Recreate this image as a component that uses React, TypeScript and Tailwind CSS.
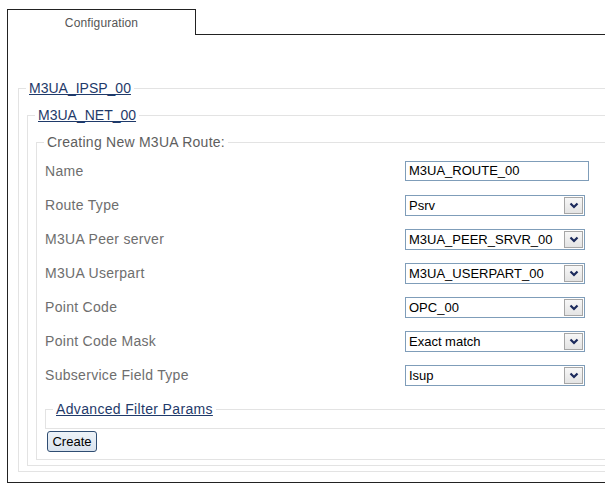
import React from "react";

function Chevron() {
  return (
    <svg width="10" height="7" viewBox="0 0 10 7">
      <path d="M1.5 1.5 L5 5 L8.5 1.5" fill="none" stroke="#1b2a5c" strokeWidth="2.2" />
    </svg>
  );
}

function Select({ value }: { value: string }) {
  return (
    <div className="w-[180px] h-[21px] border border-[#7f9db9] bg-white flex items-center justify-between pl-[3px] pr-px text-[13px] text-black">
      <span className="leading-[15px]">{value}</span>
      <div className="w-[19px] h-[17px] border border-[#a6a6a6] bg-gradient-to-b from-[#f7f7f7] to-[#e4e4e4] flex items-center justify-center">
        <Chevron />
      </div>
    </div>
  );
}

const rows: { label: string; value: string; input?: boolean }[] = [
  { label: "Name", value: "M3UA_ROUTE_00", input: true },
  { label: "Route Type", value: "Psrv" },
  { label: "M3UA Peer server", value: "M3UA_PEER_SRVR_00" },
  { label: "M3UA Userpart", value: "M3UA_USERPART_00" },
  { label: "Point Code", value: "OPC_00" },
  { label: "Point Code Mask", value: "Exact match" },
  { label: "Subservice Field Type", value: "Isup" },
];

export default function App() {
  return (
    <div
      className="w-[605px] h-[487px] overflow-hidden bg-white"
      style={{ fontFamily: '"Liberation Sans", Arial, sans-serif' }}
    >
      <div className="w-[800px] pt-[9px] pl-[7px]">
        <div className="flex h-[26px]">
          <div className="w-[189px] border-t border-l border-r border-[#222] flex items-center justify-center text-[12px] tracking-[0.15px] text-[#555]">
            Configuration
          </div>
          <div className="flex-1 border-b border-[#222]" />
        </div>
        <div className="border-l border-b border-[#222] pt-[45px] pb-[10px]">
          <fieldset className="ml-[10px] border border-[#e3e3e3] pb-[5px]">
            <legend className="ml-[7px] px-[3px] text-[14px] leading-[16px] text-[#1f3a6a] underline">
              M3UA_IPSP_00
            </legend>
            <fieldset className="ml-[8px] mt-[11px] border border-[#e3e3e3] pb-[5px]">
              <legend className="ml-[7px] px-[3px] text-[14px] leading-[16px] text-[#1f3a6a] underline">
                M3UA_NET_00
              </legend>
              <fieldset className="ml-[8px] mt-[11px] border border-[#e3e3e3] pb-[7px]">
                <legend className="ml-[7px] px-[3px] text-[14px] leading-[16px] tracking-[0.25px] text-[#5e5e5e]">
                  Creating New M3UA Route:
                </legend>
                <div className="pt-[4px] pl-[8px] flex flex-col items-start">
                  <div className="flex flex-col self-stretch">
                    {rows.map((r) => (
                      <div key={r.label} className="grid grid-cols-[360px_1fr] h-[34px] items-center">
                        <span className="text-[14px] tracking-[0.3px] text-[#6e6e6e]">{r.label}</span>
                        {r.input ? (
                          <div className="w-[184px] h-[20px] border border-[#7f9db9] bg-white flex items-center pl-[3px] text-[13px] text-black">
                            {r.value}
                          </div>
                        ) : (
                          <Select value={r.value} />
                        )}
                      </div>
                    ))}
                  </div>
                  <fieldset className="mt-[9px] self-stretch border border-[#e3e3e3]">
                    <legend className="ml-[7px] px-[3px] text-[14px] leading-[16px] tracking-[0.34px] text-[#1f3a6a] underline">
                      Advanced Filter Params
                    </legend>
                    <div className="h-[11px]" />
                  </fieldset>
                  <button className="ml-[2px] mt-[2px] w-[50px] h-[21px] border border-[#2f4d72] rounded-[3px] bg-gradient-to-b from-[#eef3f8] to-[#d9e3ee] text-[13px] text-black flex items-center justify-center">
                    Create
                  </button>
                </div>
              </fieldset>
            </fieldset>
          </fieldset>
        </div>
      </div>
    </div>
  );
}
